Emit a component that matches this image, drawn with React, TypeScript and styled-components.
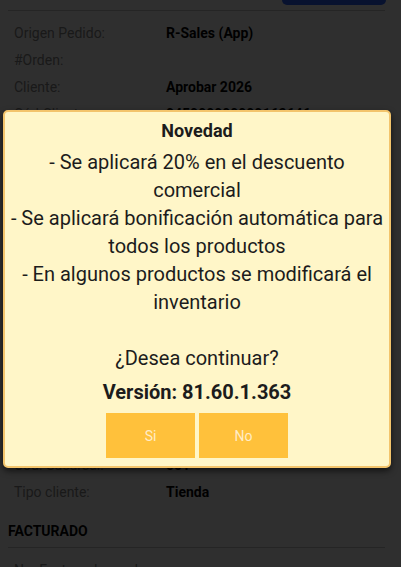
import React from "react";
import styled, { createGlobalStyle } from "styled-components";

const Global = createGlobalStyle`
  html, body {
    margin: 0;
    padding: 0;
    background: #fff;
    font-family: Roboto, "Liberation Sans", sans-serif;
    overflow: hidden;
  }
`

const Page = styled.div`
  width: 401px;
  height: 567px;
  overflow: hidden;
  position: relative;
  background: #fff;
`

const TopBar = styled.div`
  display: flex;
  justify-content: flex-end;
  height: 10px;
  border-bottom: 1px solid #c8c8c8;
  margin: 0 16px 0 8px;
`

const TopButton = styled.div`
  width: 104px;
  height: 5px;
  margin-right: -1px;
  background: #2c62ff;
  border-radius: 0 0 6px 6px;
`

const Rows = styled.div`
  padding: 8px 0 0 14px;
`

const Row = styled.div`
  display: flex;
  height: 27px;
  align-items: center;
  font-size: 14px;
`

const Label = styled.span`
  width: 152px;
  color: #8a8a8a;
`

const Value = styled.span`
  color: #050505;
  font-weight: 700;
`

const Section = styled.div`
  margin: 18px 16px 0 8px;
  padding-bottom: 8px;
  border-bottom: 1px solid #c8c8c8;
  font-size: 14px;
  font-weight: 700;
  color: #050505;
`

const Overlay = styled.div`
  position: absolute;
  inset: 0;
  background: rgba(0, 0, 0, 0.815);
`

const Modal = styled.div`
  position: absolute;
  top: 110px;
  left: 3px;
  width: 388px;
  box-sizing: border-box;
  background: #fff6c8;
  border: 2px solid #f3c46c;
  border-radius: 5px;
  box-shadow: 0 3px 6px rgba(0, 0, 0, 0.6);
  padding: 8px 2px 8px;
  display: flex;
  flex-direction: column;
  align-items: center;
  text-align: center;
  color: #1c1c1c;
`

const Title = styled.div`
  font-size: 18px;
  font-weight: 700;
  line-height: 22px;
  margin-bottom: 6px;
`

const Message = styled.div`
  font-size: 20px;
  line-height: 28px;
`

const Version = styled.div`
  font-size: 20px;
  font-weight: 700;
  line-height: 28px;
  margin-top: 6px;
`

const Buttons = styled.div`
  display: flex;
  gap: 4px;
  margin-top: 7px;
`

const Button = styled.button`
  width: 89px;
  height: 45px;
  border: none;
  background: #ffc13b;
  color: rgba(255, 255, 255, 0.72);
  font-family: Roboto, "Liberation Sans", sans-serif;
  font-size: 14px;
  padding: 0;
`

const rows: [string, string][] = [
  ["Origen Pedido:", "R-Sales (App)"],
  ["#Orden:", ""],
  ["Cliente:", "Aprobar 2026"],
  ["Cód.Cliente:", "045000000000163646"],
  ["Nombre:", "Aprobar 2026"],
  ["Dirección:", "Calle 10 # 20-30"],
  ["Ciudad:", "Bogotá"],
  ["Teléfono:", "3000000000"],
  ["Fecha pedido:", "12/05/2025"],
  ["Estado:", "Pendiente"],
  ["Vendedor:", "Usuario App"],
  ["Lista precios:", "General"],
  ["Forma pago:", "Contado"],
  ["Plazo:", "0 días"],
  ["Bodega:", "Principal"],
  ["Zona:", "Norte"],
  ["Cód. Sucursal:", "001"],
  ["Tipo cliente:", "Tienda"],
]

export default function App() {
  return (
    <>
      <Global />
      <Page>
        <TopBar><TopButton /></TopBar>
        <Rows>
          {rows.map(([l, v]) => (
            <Row key={l}><Label>{l}</Label><Value>{v}</Value></Row>
          ))}
        </Rows>
        <Section>FACTURADO</Section>
        <Rows>
          <Row><Label>No. Factura despacho:</Label><Value></Value></Row>
        </Rows>
        <Overlay />
        <Modal>
          <Title>Novedad</Title>
          <Message>
            - Se aplicará 20% en el descuento comercial<br />
            - Se aplicará bonificación automática para todos los productos<br />
            - En algunos productos se modificará el inventario<br />
            <br />
            ¿Desea continuar?
          </Message>
          <Version>Versión: 81.60.1.363</Version>
          <Buttons>
            <Button>Si</Button>
            <Button>No</Button>
          </Buttons>
        </Modal>
      </Page>
    </>
  )
}
